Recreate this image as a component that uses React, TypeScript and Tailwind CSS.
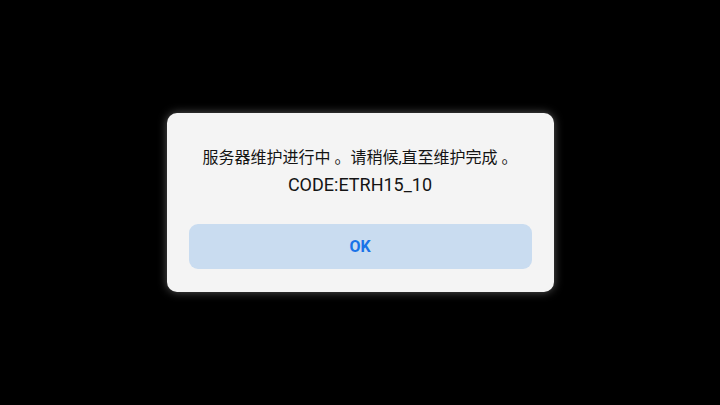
export default function App() {
  return (
    <div className="flex h-[405px] w-[720px] items-center justify-center bg-black">
      {/* Dialog */}
      <div className="flex h-[179px] w-[387px] flex-col items-center rounded-[10px] bg-[#f4f4f4] px-[22px] pt-[31px] shadow-[0_0_10px_rgba(255,255,255,0.35)]">
        <p className="text-center font-['Roboto','Noto_Sans_CJK_SC',sans-serif] text-[#141414]">
          <span className="block text-[16px] leading-[27px]">服务器维护进行中 。请稍候,直至维护完成 。</span>
          <span className="block text-[18px] leading-[27px]">CODE:ETRH15_10</span>
        </p>

        <button className="mt-auto mb-[23px] h-[45px] w-full rounded-[9px] bg-[#c9dcf0] font-['Roboto',sans-serif] text-[16px] font-bold text-[#1a73e8]">
          OK
        </button>
      </div>
    </div>
  );
}
